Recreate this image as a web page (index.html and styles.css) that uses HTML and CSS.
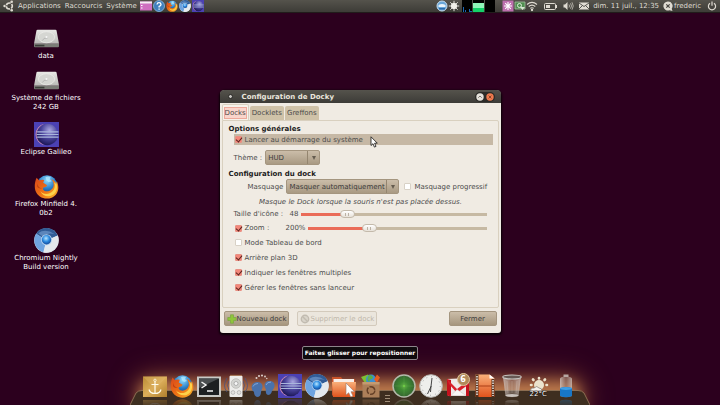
FILE: index.html
```html
<!DOCTYPE html>
<html lang="fr">
<head>
<meta charset="utf-8">
<title>Configuration de Docky</title>
<meta name="viewport" content="width=device-width, initial-scale=1">
<link rel="stylesheet" href="styles.css">
</head>
<body>
<svg class="defs" aria-hidden="true">
  <defs>
    <radialGradient id="globe" cx=".5" cy=".25" r=".8"><stop offset="0" stop-color="#8fdcff"/><stop offset=".5" stop-color="#2b7fc8"/><stop offset="1" stop-color="#0b2a66"/></radialGradient>
    <linearGradient id="fox" x1="0" y1="0" x2="1" y2="1"><stop offset="0" stop-color="#d8461a"/><stop offset=".55" stop-color="#ee7415"/><stop offset="1" stop-color="#fbb92c"/></linearGradient>
    <radialGradient id="orb" cx=".6" cy=".3" r=".75"><stop offset="0" stop-color="#a9a6e0"/><stop offset=".5" stop-color="#4a449c"/><stop offset="1" stop-color="#17124f"/></radialGradient>
    <radialGradient id="core" cx=".45" cy=".35" r=".7"><stop offset="0" stop-color="#b8e6ff"/><stop offset=".5" stop-color="#2d8be0"/><stop offset="1" stop-color="#0e3c8c"/></radialGradient>
    <linearGradient id="silver" x1="0" y1="0" x2="0" y2="1"><stop offset="0" stop-color="#e9e9e6"/><stop offset="1" stop-color="#b9bab6"/></linearGradient>
    <linearGradient id="gold" x1="0" y1="0" x2="1" y2="1"><stop offset="0" stop-color="#b98a35"/><stop offset=".5" stop-color="#dcae5a"/><stop offset="1" stop-color="#b07f2c"/></linearGradient>
    <linearGradient id="orange" x1="0" y1="0" x2="0" y2="1"><stop offset="0" stop-color="#f9b07a"/><stop offset="1" stop-color="#e0531c"/></linearGradient>
    <radialGradient id="green"><stop offset="0" stop-color="#62b043"/><stop offset=".4" stop-color="#3f8a33"/><stop offset="1" stop-color="#356530"/></radialGradient>
    <linearGradient id="glass" x1="0" y1="0" x2="1" y2="0"><stop offset="0" stop-color="#d8d0cc" stop-opacity=".75"/><stop offset=".5" stop-color="#a99a94" stop-opacity=".35"/><stop offset="1" stop-color="#d8d0cc" stop-opacity=".7"/></linearGradient>
  </defs>
  <symbol id="firefox" viewBox="0 0 24 24">
    <circle cx="12.5" cy="11" r="9.7" fill="url(#globe)"/>
    <path d="M11 3q3-1 5 0l-1 2 2 2-3 1-2-2z" fill="#b9ecff" opacity=".7"/>
    <path d="M2.500 3.500 5 6.300Q7.500 5 9.800 5.800L8.800 8.500l3.800 2.300q-.4 2-3.300 2.200c-1.500.8-.4 3.200 2.200 3.600 3.300.5 6.500-1.800 7.200-5.100.5-2.500-.4-4.800-2.200-6.700 2.700.8 4.500 3 4.900 5.700l.5-3.500c3.200 6.500.9 13.500-5 15.800-6.300 2.400-13.400-.5-15.600-7C.2 12 .7 7.500 2.500 3.500z" fill="url(#fox)"/>
    <path d="M18.300 6.500c3 4 1.900 9.800-3.300 12-3.700 1.500-7.200 0-9-2.300 2 5.300 8.800 6.700 13 3.300 3.700-3 3.800-8.400 2-12.300l-.4 2.300z" fill="#fdd24a"/>
    <path d="M3 9c1 3 2 4 5 5-2 0-4 0-5-2z" fill="#a92a10" opacity=".6"/>
  </symbol>
  <symbol id="chromium" viewBox="0 0 24 24">
    <circle cx="12" cy="12" r="11.800" fill="#dfe6ee"/>
    <path d="M12 12 2 5.500A11.800 11.800 0 0 1 22.800 7.200z" fill="#315c96"/>
    <path d="M12 12 2 5.500C-1.500 11 .3 20.500 9 23.500z" fill="#6fa4e0"/>
    <path d="M12 12 22.800 7.200C26 16 18 25.500 9 23.500z" fill="#e4e9ed"/>
    <path d="M4 5q7-5 16 1-7-2-12 2z" fill="#87afe0" opacity=".5"/>
    <circle cx="12" cy="11.300" r="5.300" fill="#b5d3ef"/><circle cx="12" cy="11.300" r="4.500" fill="url(#core)"/>
  </symbol>
  <symbol id="eclipse" viewBox="0 0 24 24">
    <path d="M0 0h24v24H0z" fill="#4b41b4"/>
    <path d="M10 1.600A10.600 10.600 0 0 0 10 22.400 12.500 12.500 0 0 1 10 1.600z" fill="#c486b4"/>
    <circle cx="12.800" cy="12" r="10.300" fill="url(#orb)"/>
    <path d="M3 9.500h20.500M2.500 12h21M3 14.500h20.500" stroke="#a9b6dc" stroke-width="1.100"/>
  </symbol>
  <symbol id="drive" viewBox="0 0 24 18">
    <path d="M3.500.5h17q1 0 1.200 1L24 14H0L2.300 1.500Q2.500.5 3.500.5z" fill="url(#silver)"/>
    <path d="M0 14h24v2.500q0 1-1 1H1q-1 0-1-1z" fill="#7b7d77"/><path d="M1 15h9v1.600H1z" fill="#3b3d39"/>
    <ellipse cx="12" cy="7.800" rx="7.800" ry="5.300" fill="#d5d6d2" stroke="#f0f0ee" stroke-width=".6"/>
    <path d="M8 11q1-3 5-2.500" stroke="#aaa" stroke-width=".7" fill="none"/><circle cx="12" cy="7.500" r="1" fill="#f6f6f6"/>
  </symbol>
  <symbol id="cursor" viewBox="0 0 8 12"><path d="M1 .8v8.700l2-1.800 1.400 3.400 1.600-.7L4.600 7.200h2.700z" fill="#fff" stroke="#111" stroke-width=".8"/></symbol>
</svg>

<header class="panel">
  <nav class="panel-group menus">
    <svg class="ubuntu" viewBox="0 0 12 12" fill="none" stroke="#dfdbd2"><circle cx="6.300" cy="6" r="3" stroke-width="1.700" stroke-dasharray="5.200 1.100" stroke-dashoffset="2.600"/><circle cx="1.500" cy="6" r="1.200" fill="#dfdbd2" stroke="none"/><circle cx="8.700" cy="1.700" r="1.300" fill="#dfdbd2" stroke="none"/><circle cx="8.700" cy="10.300" r="1.300" fill="#dfdbd2" stroke="none"/></svg>
    <button type="button">Applications</button>
    <button type="button">Raccourcis</button>
    <button type="button">Système</button>
  </nav>
  <div class="panel-group launchers">
    <svg viewBox="0 0 12 12"><path d="M0 1.500h12v9H0z" fill="#cf6fc0"/><path d="M0 1.500h12v2H0z" fill="#f3eef2"/><path d="M1 5h1.500v1H1zM1 7.500h1.500v1H1z" fill="#fff"/></svg>
    <svg viewBox="0 0 12 12"><circle cx="6" cy="6" r="5.500" fill="#3f7fbd" stroke="#8cb9e2" stroke-width=".8"/><path d="M4 4.500Q4.200 2.700 6 2.700t2 1.700Q8 5.600 6.100 6.400v1M6.100 8.500v1.200" fill="none" stroke="#fff" stroke-width="1.300"/></svg>
    <svg><use href="#firefox"/></svg>
    <svg><use href="#chromium"/></svg>
    <svg><use href="#eclipse"/></svg>
  </div>
  <div class="panel-group status">
    <svg viewBox="0 0 12 12"><circle cx="6" cy="6" r="5" fill="#69a6d8" stroke="#c5dcef"/><path d="M2.500 5q3.500-2 7 0v2h-7z" fill="#e8f3fb"/><path d="M3 8h6v1.500H3z" fill="#2a6bab"/></svg>
    <svg viewBox="0 0 12 12" fill="#f2f0ea" stroke="#f2f0ea"><circle cx="6" cy="6" r="2.700"/><path d="M6 .8v10.400M.8 6h10.400M2.300 2.300l7.400 7.400M9.700 2.300 2.300 9.700" stroke-width=".9"/></svg>
    <svg class="monitor" viewBox="0 0 34 12"><path d="M0 0h10v12H0z"/><path d="M11 0h11v12H11z"/><path d="M23 0h10v12H23z"/><path d="M1 7h1v5H1zM3 10h1v2H3zM7 9h1v3H7zM8 11h2v1H8z" fill="#1b66b5"/><path d="M11 3h11v5H11z" fill="#8ff5b9"/><path d="M11 8h11v4H11z" fill="#14d169"/></svg>
    <svg class="push" viewBox="0 0 12 12"><path d="M.5.500h11v11H.5z" fill="#bd6fae"/><path d="M6 2v8M2 6h8M3.200 3.200l5.600 5.600M8.800 3.200 3.200 8.800" stroke="#fff" stroke-width="1.100"/></svg>
    <svg viewBox="0 0 12 12"><path d="M1 2h10v7H1z" fill="#4f8f50" stroke="#a5bf9e" stroke-width=".8"/><circle cx="5.500" cy="5.500" r="2" fill="none" stroke="#dcebd8"/><path d="m6 7 2.500 3L11 7z" fill="#d8e5d2"/></svg>
    <svg viewBox="0 0 12 12" fill="none" stroke="#dfdbd2" stroke-width="1.100"><path d="M1 4.500q5-4.300 10 0M2.700 6.500q3.300-2.800 6.600 0M4.300 8.400q1.700-1.400 3.400 0"/><circle cx="6" cy="10" r=".6" fill="#dfdbd2"/></svg>
    <svg class="wide" viewBox="0 0 14 12"><rect x="1.500" y="3.500" width="11" height="6" rx="1" fill="none" stroke="#dfdbd2"/><path d="M3 5h4v3H3zM13 5h1v3h-1z" fill="#dfdbd2"/></svg>
    <svg viewBox="0 0 12 12" fill="none" stroke="#c9c5bc"><path d="M1.500 4.500H3L5.500 2v8L3 7.500H1.500z" fill="#dfdbd2" stroke="none"/><path d="M7 4.500q1 1.500 0 3M8.500 3.300q2 2.700 0 5.400M10 2.300q2.500 3.700 0 7.400" stroke-width=".8"/></svg>
    <svg class="mail" viewBox="0 0 12 12"><path d="M1 2.500h10v7H1z" fill="#dfdbd2"/><path d="m1 3 5 3.500L11 3M1 9l3-3M11 9 8 6" fill="none" stroke="#45443f" stroke-width=".9"/></svg>
    <time>dim. 11 juil., 12:35</time>
    <svg class="chat" viewBox="0 0 12 12"><path d="M6 1.500a4.500 4.500 0 1 0 1.500 8.700L10.500 11 9.700 8.700A4.500 4.500 0 0 0 6 1.500z" fill="#dfdbd2"/><path d="m4.300 4.300 3.400 3.400M7.700 4.300 4.300 7.700" stroke="#45443f" stroke-width="1.200"/></svg>
    <span class="user">frederic</span>
    <svg class="power" viewBox="0 0 12 12" fill="none" stroke="#dfdbd2" stroke-width="1.200"><path d="M4 3.200a3.600 3.600 0 1 0 4 0M6 1.500v4.200"/></svg>
  </div>
</header>

<main class="desktop">
  <ul class="shortcuts">
    <li><a href="#data"><svg class="drive"><use href="#drive"/></svg>data</a></li>
    <li><a href="#fs"><svg class="drive"><use href="#drive"/></svg>Système de fichiers<br>242 GB</a></li>
    <li><a href="#eclipse-galileo"><svg><use href="#eclipse"/></svg>Eclipse Galileo</a></li>
    <li class="spaced"><a href="#minefield"><svg><use href="#firefox"/></svg>Firefox Minfield 4.<br>0b2</a></li>
    <li><a href="#nightly"><svg><use href="#chromium"/></svg>Chromium Nightly<br>Build version</a></li>
  </ul>

  <form class="dialog" aria-labelledby="title">
    <div class="titlebar">
      <span class="app-dot"></span>
      <h1 id="title">Configuration de Docky</h1>
      <div class="window-buttons">
        <button type="button" aria-label="Agrandir"><svg viewBox="0 0 8 8"><circle cx="4" cy="4" r="3.700" fill="#e6e2dc"/><path d="m2.300 4.700 1.700-1.700 1.700 1.700" fill="none" stroke="#77736b"/></svg></button>
        <button type="button" aria-label="Quitter"><svg viewBox="0 0 8 8"><circle cx="4" cy="4" r="3.700" fill="#f07a4e"/><path d="m2.600 2.600 2.800 2.800M5.400 2.600 2.600 5.400" stroke="#8a4428"/></svg></button>
      </div>
    </div>
    <div class="tabs" role="tablist">
      <button type="button" role="tab" aria-selected="true" class="tab active"><span>Docks</span></button>
      <button type="button" role="tab" aria-selected="false" class="tab">Docklets</button>
      <button type="button" role="tab" aria-selected="false" class="tab">Greffons</button>
    </div>
    <div class="page">
      <h2>Options générales</h2>
      <div class="row hover"><input type="checkbox" id="startup" checked><label for="startup">Lancer au démarrage du système</label></div>
      <div class="row combo-row theme"><label for="theme">Thème :</label><div class="combo"><select id="theme"><option>HUD</option></select></div></div>
      <h2>Configuration du dock</h2>
      <div class="row combo-row hiding"><label for="hide">Masquage</label><div class="combo"><select id="hide"><option>Masquer automatiquement</option></select></div><input type="checkbox" id="fade"><label for="fade">Masquage progressif</label></div>
      <p class="hint">Masque le Dock lorsque la souris n'est pas placée dessus.</p>
      <div class="row slider-row"><label for="size">Taille d'icône :</label><output for="size">48</output><input type="range" id="size" min="0" max="100" value="23" style="--fill:23%"></div>
      <div class="row slider-row"><input type="checkbox" id="zoom-on" checked><label for="zoom-on">Zoom :</label><output for="zoom">200%</output><input type="range" id="zoom" aria-label="Zoom" min="0" max="100" value="33" style="--fill:33%"></div>
      <div class="row option"><input type="checkbox" id="panel-mode"><label for="panel-mode">Mode Tableau de bord</label></div>
      <div class="row option"><input type="checkbox" id="bg3d" checked><label for="bg3d">Arrière plan 3D</label></div>
      <div class="row option"><input type="checkbox" id="multi" checked><label for="multi">Indiquer les fenêtres multiples</label></div>
      <div class="row option"><input type="checkbox" id="manage" checked><label for="manage">Gérer les fenêtres sans lanceur</label></div>
    </div>
    <div class="actions">
      <button type="button" class="btn"><svg viewBox="0 0 10 10"><path d="M3.500.8h3v2.700h2.700v3H6.500v2.700h-3V6.500H.8v-3h2.700z" fill="#8ec63a" stroke="#7aa640" stroke-width=".7"/></svg>Nouveau dock</button>
      <button type="button" class="btn" disabled><svg viewBox="0 0 10 10" fill="none" stroke="#c1bbb0"><circle cx="5" cy="5" r="3.700" fill="#d9d4ca" stroke-width="1.400"/><path d="m2.500 2.500 5 5" stroke-width="1.400"/></svg>Supprimer le dock</button>
      <button type="button" class="btn close">Fermer</button>
    </div>
    <svg class="pointer"><use href="#cursor"/></svg>
  </form>

  <footer class="dock">
    <div class="glow"></div>
    <svg class="shelf" viewBox="0 0 460 15" preserveAspectRatio="none"><path d="M0 15 6 3Q8 .5 12 .5h436q4 0 6 2.500l6 12z" fill="#3e2e20"/><path d="M0 15 6 3Q8 .5 12 .5h436q4 0 6 2.500l6 12" fill="none" stroke="#8b6d51"/></svg>
    <div role="tooltip" class="tooltip">Faites glisser pour repositionner</div>
    <div class="items">
      <svg viewBox="0 0 24 24"><path d="M0 2.500h24V23H0z" fill="url(#gold)"/><path d="M0 2.500h24L12 15z" fill="#e3b970" opacity=".35"/><path d="M12 7.500v12M8.500 10.500h7M6 15.500q1 4 6 4t6-4" fill="none" stroke="#fffbea" stroke-width="1.200"/><circle cx="12" cy="6.300" r="1.200" fill="none" stroke="#fffbea" stroke-width=".8"/></svg>
      <svg><use href="#firefox"/></svg>
      <svg viewBox="0 0 24 24"><path d="M0 2.500h24V23H0z" fill="#c9cac7"/><path d="M2 4.500h20V21H2z" fill="#1d2022"/><path d="M2 4.500h20L2 14z" fill="#4b4f51"/><path d="m4.500 8 4.500 3-4.500 3M10 17h6" fill="none" stroke="#f5f5f5" stroke-width="1.500"/></svg>
      <svg viewBox="0 0 24 24"><path d="M3 4q-5 8 0 14M5 7q-3 4 0 9M21 4q5 8 0 14M19 7q3 4 0 9" fill="none" stroke="#4a5382" stroke-width=".8"/><path d="M6 .8h12v1.500H6z" fill="#8d512c"/><rect x="5.500" y="1.800" width="13" height="21.200" rx="1" fill="#ededeb"/><circle cx="12" cy="9.500" r="4.800" fill="#d3d4d1" stroke="#b5b5b2" stroke-width=".7"/><circle cx="12" cy="9.500" r="2" fill="#f7f7f7" stroke="#999" stroke-width=".7"/><circle cx="9" cy="18.500" r="1.900" fill="#e3e3e0" stroke="#aaa" stroke-width=".7"/><circle cx="15" cy="18.500" r="1.900" fill="#e3e3e0" stroke="#aaa" stroke-width=".7"/></svg>
      <svg viewBox="0 0 24 24" fill="#4a72ab"><path d="M.5 13Q1 8.500 6 8q6 0 5.500 5.500-1 3-1.500 4.500 0 5-4 5-3-1-3-5-2.500-2-2.500-5zM13.500 12Q13.500 7 18.500 7q5.500 0 5 5.500-1 3-2.500 4.500-1 4-4 4-3-1-2-5z"/><path d="M2 12.500q1-3 5-3M15 11q1-3 5-3" fill="none" stroke="#84a6d5"/><g fill="#ded3cf"><circle cx="5.500" cy="4" r="1"/><circle cx="8" cy="2" r="1"/><circle cx="11" cy="1.500" r="1"/><circle cx="14" cy="2.500" r=".9"/><circle cx="15.800" cy="4.500" r=".7"/></g></svg>
      <svg><use href="#eclipse"/></svg>
      <svg><use href="#chromium"/></svg>
      <svg viewBox="0 0 24 24"><path d="M0 3h9l1.500 2H23v16.500H0z" fill="#c8532a"/><path d="M1.500 5h20.500V9H1.500z" fill="#f8eee8"/><path d="M0 8h24l-1 15H1z" fill="url(#orange)"/><path d="M14 9v12l2.700-2.300 2 4.300 2.300-1-2-4.300h3.500z" fill="#fff" stroke="#9b7766" stroke-width=".6"/></svg>
      <svg viewBox="0 0 24 24"><path d="m2 3 7-2.500 3 5L6 9z" fill="#7ebf35"/><circle cx="12" cy="5.500" r="5" fill="#3c8fd0"/><path d="M10 1q4 0 4 3-3 1-4 4-3-3 0-7z" fill="#5aad45"/><path d="m18 .5 3 3-3 5-3-3z" fill="#e55d22"/><path d="M3.500 8h17v15.500h-17z" fill="#ac7f59"/><path d="M3.500 8h17v2.500h-17z" fill="#c59a70"/><circle cx="12" cy="16.500" r="3.800" fill="none" stroke="#664128" stroke-width="1.500" stroke-dasharray="6.760 1.200"/></svg>
      <span class="divider"></span>
      <svg viewBox="0 0 24 24"><circle cx="12" cy="12" r="11" fill="url(#green)" stroke="#b3b9ab" stroke-width="1.500"/><path d="M1 12h22M12 1v22" stroke="#7fc16d" stroke-width=".4" opacity=".5"/><circle cx="12" cy="12" r=".8" fill="#79ef43"/></svg>
      <svg viewBox="0 0 24 24"><circle cx="12" cy="12" r="11.300" fill="#eeeeec" stroke="#b7b7b4"/><circle cx="12" cy="12" r="9.300" fill="none" stroke="#8b8b8b" stroke-dasharray=".7 4.170"/><path d="m13 4-1 8.500-3.500 7.500M12 12l-.5 6" fill="none" stroke="#333" stroke-width=".9"/></svg>
      <div class="badged"><svg viewBox="0 0 24 24"><path d="M1 5 23 4v18H2z" fill="#eee9e7"/><path d="m1 5 4 1v16.500l-4-1zM23 6l-3 2v14h3z" fill="#c5121d"/><path d="m1 5 10 10L23 6v4L11 19 3 10z" fill="#d9202a"/><path d="m5 21.500 6-6 9 6z" fill="#f9f7f5" stroke="#cfc2be" stroke-width=".5"/></svg><span class="badge">6</span></div>
      <svg viewBox="0 0 24 24"><path d="M2.500.5h14l5 4v18.500h-19z" fill="url(#orange)"/><path d="M2.500.5h3V23h-3z" fill="#56301c"/><path d="M18.500 5h3v18h-3z" fill="#56301c"/><path d="M4 2v20M20 6v16" stroke="#eee" stroke-width="1.500" stroke-dasharray="1.500 1"/><path d="M16.500.5v4h5z" fill="#fff"/><path d="M5.500 12h13" stroke="#aa3e17"/></svg>
      <svg viewBox="0 0 24 24"><path d="m3 3 2.500 19q6.500 2.500 13 0L21 3z" fill="url(#glass)"/><ellipse cx="12" cy="3" rx="9.300" ry="2" fill="#665853" stroke="#c9c6c2" stroke-width="1.200"/><ellipse cx="12" cy="21.500" rx="6.500" ry="1.500" fill="#c9c3be"/><path d="M7 7l1 12M12 7v12M17 7l-1 12" stroke="#d8d0cb" stroke-width=".7" opacity=".4"/></svg>
      <div class="badged"><svg viewBox="0 0 24 24"><circle cx="12" cy="11" r="5" fill="#ece3cd"/><path d="M12 4v.5M17.500 6l.5-.5M6.500 6 6 5.500M4 11h.5M19.500 11h.5" stroke="#ece3cd" stroke-width="2.600" stroke-linecap="round"/><path d="M3 17q1-4 4-3 3-3 5 0 3 0 3 3z" fill="#f6f3ed" stroke="#695f58" stroke-width=".6"/></svg><span class="degrees">22°C</span></div>
      <svg viewBox="0 0 24 24"><path d="M9.500.5h5V3h-5z" fill="#b7a7a3"/><path d="M6 5q0-2.500 6-2.500T18 5v17q-6 2.500-12 0z" fill="url(#glass)"/><path d="M6 14q6-2 12 0v8q-6 2.500-12 0z" fill="#1877c6"/><ellipse cx="12" cy="14.500" rx="6" ry="1.500" fill="#3f9fe5"/></svg>
    </div>
  </footer>
</main>
</body>
</html>
```

FILE: styles.css
```css
* { box-sizing: border-box; }

body {
  margin: 0;
  height: 100vh;
  display: flex;
  flex-direction: column;
  overflow: hidden;
  background: #2c001e;
  color: #4c4c4c;
  font: 7px/10px "DejaVu Sans", sans-serif;
}

button, select, input { font: inherit; color: inherit; margin: 0; }
button { border: 0; padding: 0; background: none; white-space: nowrap; }
h1, h2, p, ul { margin: 0; padding: 0; }
svg { display: block; flex: none; }
.defs { position: absolute; width: 0; height: 0; }

/* Top panel */
.panel {
  display: flex;
  align-items: center;
  height: 13px;
  padding: 0 2px 0 3px;
  color: #dfdbd2;
  background: linear-gradient(#55534c, #3d3c37);
  border-bottom: 1px solid #211c1b;
  white-space: nowrap;
}
.panel-group { display: flex; align-items: center; }
.panel svg { width: 12px; height: 12px; }
.menus { gap: 4px; }
.menus .ubuntu { margin-right: -1px; }
.launchers { gap: 1px; margin-left: 3px; }
.status { margin-left: auto; }
.panel .monitor { width: 34px; margin-left: 2px; }
.panel .push { margin-left: 6px; }
.panel .wide { width: 14px; margin: 0 5px; }
.panel .mail { margin-left: 4px; }
.status time { margin: 0 3px; }
.user { margin-right: 5px; }

/* Desktop */
.desktop { flex: 1; position: relative; display: flex; flex-direction: column; }

.shortcuts {
  list-style: none;
  width: 92px;
  padding-top: 16px;
  display: flex;
  flex-direction: column;
  gap: 10px;
}
.shortcuts a {
  display: flex;
  flex-direction: column;
  align-items: center;
  text-align: center;
  color: #fff;
  text-decoration: none;
  line-height: 9px;
  white-space: nowrap;
}
.shortcuts svg { width: 25px; height: 25px; margin-bottom: 1px; }
.shortcuts .drive { height: 19px; margin-bottom: 4px; }
.shortcuts .spaced { margin-top: 7px; }

/* Dialog */
.dialog {
  position: absolute;
  top: 77px;
  left: 0;
  right: 0;
  width: 281px;
  margin: 0 auto;
  background: #f0ebe3;
  border-radius: 5px 5px 3px 3px;
  box-shadow: 0 1px 2px 1px #0b0007;
}
.titlebar {
  display: flex;
  align-items: center;
  height: 13px;
  padding: 0 6px 0 8px;
  border-radius: 4px 4px 0 0;
  background: linear-gradient(#55534c, #3c3b37);
  color: #e9e5dc;
}
.app-dot { width: 5px; height: 5px; border-radius: 50%; background: #c5c3bf; border: 1px solid #292825; }
.titlebar h1 { margin-left: 9px; font-size: 7px; }
.window-buttons { display: flex; gap: 2px; margin-left: auto; padding: 1px; border-radius: 5px; background: #2c2b28; }
.window-buttons svg { width: 8px; height: 8px; }

.tabs { display: flex; align-items: flex-end; height: 17px; gap: 1px; padding: 0 2px; }
.tab {
  height: 14px;
  padding: 0 2px;
  background: #cfc2a8;
  border-radius: 2px 2px 0 0;
}
.tab.active { height: 16px; background: #f6f2ea; border: 1px solid #d8d0c0; border-bottom: 0; padding: 0 1px; }
.tab.active span { display: block; padding: 0 1px; background: #f9d5cb; outline: 1px solid #eda99b; outline-offset: -1px; line-height: 12px; }

.page {
  margin: 0 2px;
  padding: 4px 5px 12px 6px;
  border: 1px solid #d9d0bf;
  border-radius: 0 2px 2px 2px;
}
h2 { font-size: 7px; line-height: 9px; color: #1c1c1c; }
.row { display: flex; align-items: center; height: 15px; margin-left: 5px; white-space: nowrap; }
.row label { flex: none; }
.row.hover { height: 11px; background: #c6b8a5; }
input[type="checkbox"] {
  appearance: none;
  flex: none;
  width: 7px;
  height: 7px;
  margin: 0 3px 0 1px;
  border: 1px solid #d8d1c6;
  border-radius: 1px;
  background: #fff;
  position: relative;
}
input[type="checkbox"]:checked { background: #f3877a; border-color: #e99084; }
input[type="checkbox"]:checked::after {
  content: "";
  position: absolute;
  left: 1px;
  top: -1px;
  width: 3px;
  height: 5px;
  border: solid #5c221c;
  border-width: 0 1px 1px 0;
  transform: rotate(40deg);
}

.combo-row label { margin-right: 3px; }
.theme { margin-top: 5px; margin-bottom: 5px; }
.theme .combo { width: 55px; }
.hiding { margin-left: 19px; }
.hiding .combo { width: 113px; margin-right: 4px; }
.combo { position: relative; height: 15px; }
.combo select {
  appearance: none;
  width: 100%;
  height: 15px;
  padding: 0 13px 0 2px;
  border: 1px solid #a4957f;
  border-radius: 2px;
  background: linear-gradient(#cbbda9, #a99a83);
  color: #3c3c3c;
}
.combo::before {
  content: "";
  position: absolute;
  right: 12px;
  top: 1px;
  bottom: 1px;
  width: 1px;
  background: #94856f;
  z-index: 1;
}
.combo::after {
  content: "";
  position: absolute;
  right: 4px;
  top: 6px;
  border: solid transparent;
  border-width: 4px 2px 0;
  border-top-color: #655c4f;
}

.hint { margin-top: 3px; text-align: center; font-style: italic; }
.slider-row { height: 14px; margin-right: 6px; }
.slider-row output { width: 24px; margin-left: auto; text-align: right; }
input[type="range"] {
  appearance: none;
  flex: none;
  height: 9px;
  width: 186px;
  margin-left: 2px;
  background: linear-gradient(90deg, #ea6c58 var(--fill), #c6b9a3 var(--fill)) center / 100% 3px no-repeat;
}
#zoom { width: 179px; }
input[type="range"]::-webkit-slider-thumb {
  appearance: none;
  width: 15px;
  height: 8px;
  border: 1px solid #c4baab;
  border-radius: 4px;
  background:
    linear-gradient(90deg, #bbb2a5 1px, transparent 1px 3px, #bbb2a5 3px) center / 4px 3px no-repeat,
    linear-gradient(#fff, #e7e1d8);
}

.actions { display: flex; align-items: center; gap: 8px; padding: 3px 4px 7px; }
.btn {
  display: flex;
  align-items: center;
  justify-content: center;
  height: 15px;
  padding: 0 2px;
  border: 1px solid #a4957f;
  border-radius: 2px;
  background: linear-gradient(#cbbda9, #a6967e);
  color: #3c3c3c;
}
.btn svg { width: 10px; height: 10px; }
.btn:disabled { background: #ebe6dd; border-color: #d3cabc; color: #bfb7aa; }
.btn.close { width: 48px; margin-left: auto; }
.pointer { position: absolute; left: 150px; top: 46px; width: 8px; height: 12px; }

/* Dock */
.dock { position: relative; margin-top: auto; padding-bottom: 7px; display: flex; justify-content: center; }
.glow {
  position: absolute;
  bottom: -8px;
  width: 440px;
  height: 32px;
  border-radius: 12px;
  background: #bd7a4c;
  box-shadow: 0 0 20px 6px #7a3f2a;
  filter: blur(7px);
}
.shelf { position: absolute; bottom: 0; width: 460px; height: 15px; }
.items { position: relative; display: flex; align-items: center; gap: 3px; }
.items svg { width: 24px; height: 24px; -webkit-box-reflect: below 1px linear-gradient(transparent 60%, rgba(0, 0, 0, .35)); }
.divider { align-self: flex-end; width: 5px; height: 7px; margin: 0 -1px -4px; background: repeating-linear-gradient(#a08d78 0 1px, transparent 1px 3px); }
.badged { position: relative; }
.badge {
  position: absolute;
  top: -1px;
  right: 0;
  width: 13px;
  height: 13px;
  border-radius: 50%;
  background: #b18a5a;
  border: 1px solid #dcc49b;
  color: #fff;
  font-weight: bold;
  font-size: 8px;
  line-height: 11px;
  text-align: center;
}
.degrees {
  position: absolute;
  left: 3px;
  bottom: 0;
  color: #fff;
  font-size: 7px;
  line-height: 8px;
  text-shadow: 0 0 1px #000, 0 0 1px #000;
}
.tooltip {
  position: absolute;
  bottom: 45px;
  padding: 1px 2px;
  border: 1px solid #8d858a;
  border-radius: 2px;
  background: #0f0a0d;
  color: #fff;
  font-size: 6px;
  line-height: 10px;
  font-weight: bold;
  white-space: nowrap;
}
```
